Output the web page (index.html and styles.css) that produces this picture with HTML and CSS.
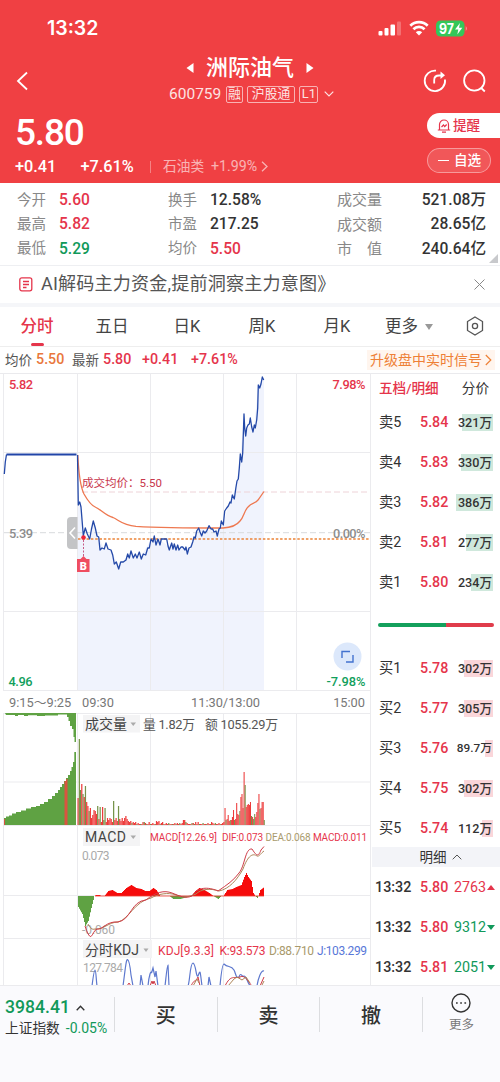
FILE: index.html
```html
<!DOCTYPE html>
<html lang="zh-CN">

<head>
    <meta charset="UTF-8">
    <meta name="viewport" content="width=device-width, initial-scale=1.0">
    <title>洲际油气 600759</title>
    <link rel="stylesheet" href="styles.css">
</head>

<body>
    <header class="header">
        <div class="status-bar">
            <span class="clock">13:32</span>
            <svg class="status-icons" width="92" height="20" viewBox="0 0 92 20">
                <g fill="#fff">
                    <rect x="2.500" y="13" width="4" height="4.500" rx="1" />
                    <rect x="8.500" y="10" width="4" height="7.500" rx="1" />
                    <rect x="14.500" y="6.500" width="4.500" height="11" rx="1" />
                    <rect x="21" y="3.500" width="4" height="14" rx="1" opacity=".25" />
                    <path d="M43 17.500l-3.200-3.300a4.600 4.600 0 0 1 6.400 0z" />
                </g>
                <path d="M34.300 7.700a12.400 12.400 0 0 1 17.400 0M37.400 11.200a8 8 0 0 1 11.200 0" fill="none" stroke="#fff" stroke-width="2.700" />
                <rect x="60" y="2.500" width="28.500" height="16" rx="4.500" fill="#34c759" />
                <path d="M89.800 8q2 2.500 0 5z" fill="#fff" opacity=".5" />
                <text x="63" y="15.500" class="battery" textLength="15" lengthAdjust="spacingAndGlyphs">97</text>
                <path d="M84 5l-5 6.500h3.300l-1 5 5-6.700h-3.300z" fill="#fff" />
            </svg>
        </div>
        <div class="nav">
            <svg class="back" width="14" height="20" viewBox="0 0 14 20"><path d="M11 1.500L2 10l9 8.500" /></svg>
            <div class="title-box">
                <div class="title">
                    <svg width="8" height="10" viewBox="0 0 8 10"><path d="M7.500 0v10L.5 5z" /></svg>
                    <h1>洲际油气</h1>
                    <svg width="8" height="10" viewBox="0 0 8 10"><path d="M.5 0v10l7-5z" /></svg>
                </div>
                <div class="code">
                    <span class="code-num">600759</span>
                    <span class="tag">融</span>
                    <span class="tag tag-hgt">沪股通</span>
                    <span class="tag tag-l1">L1</span>
                    <svg width="10" height="6" viewBox="0 0 10 6"><path d="M.7.7L5 5 9.300.7" /></svg>
                </div>
            </div>
            <div class="nav-icons">
                <svg width="24" height="24" viewBox="0 0 24 24">
                    <path d="M13 1.700A10.200 10.200 0 1 0 22 10.500M11.200 14.500V11q0-4.500 5-4.500h3" />
                    <path d="M17.500 2.500v7.500l4.500-3.700z" class="filled" />
                </svg>
                <svg width="24" height="24" viewBox="0 0 24 24">
                    <circle cx="11.300" cy="11.500" r="10.200" />
                    <path d="M18.200 19l3.600 3.500" />
                </svg>
            </div>
        </div>
        <div class="price-box">
            <div class="price-left">
                <div class="price">5.80</div>
                <div class="change">
                    <b>+0.41</b>
                    <b class="percent">+7.61%</b>
                    <i></i>
                    <span class="industry">石油类</span>
                    <span class="industry-rate">+1.99%</span>
                    <svg width="7" height="11" viewBox="0 0 7 11"><path d="M1 .8l5 4.700-5 4.700" /></svg>
                </div>
            </div>
            <div class="price-right">
                <div class="remind">
                    <svg width="14" height="14" viewBox="0 0 14 14"><path d="M2.500 10.500V5.500a4.500 4.500 0 0 1 9 0v5M.8 11h12.400M5 13.200h4M4.500 8l2-2 1.200 1.500 2-2" /></svg>
                    <span>提醒</span>
                </div>
                <div class="favorite"><i></i><span>自选</span></div>
            </div>
        </div>
    </header>

    <section class="stats">
        <label>今开</label><span class="red">5.60</span><label>换手</label><span>12.58%</span><label class="wide">成交量</label><span class="right">521.08万</span>
        <label>最高</label><span class="red">5.82</span><label>市盈</label><span>217.25</span><label class="wide">成交额</label><span class="right">28.65亿</span>
        <label>最低</label><span class="green">5.29</span><label>均价</label><span class="red">5.50</span><label class="wide">市　值</label><span class="right">240.64亿</span>
        <div class="corner"></div>
    </section>

    <section class="notice">
        <svg width="14" height="15" viewBox="0 0 14 15"><rect x=".8" y=".8" width="12" height="13" rx="2" /><path d="M4 4.500h6M4 7.500h6M4 10.500h3.500" /></svg>
        <p>AI解码主力资金,提前洞察主力意图》</p>
        <svg class="close" width="11" height="11" viewBox="0 0 11 11"><path d="M.5.5l10 10M10.500.5l-10 10" /></svg>
    </section>

    <nav class="tabs">
        <span class="active">分时</span>
        <span>五日</span>
        <span>日K</span>
        <span>周K</span>
        <span>月K</span>
        <span class="more">更多<i></i></span>
        <svg width="18" height="20" viewBox="0 0 18 20"><path d="M9 1l7.500 4.500v9L9 19l-7.500-4.500v-9z" /><circle cx="9" cy="10" r="2.600" /></svg>
    </nav>

    <section class="summary">
        <span>均价</span><b class="orange">5.50</b><span>最新</span><b>5.80</b><b>+0.41</b><b>+7.61%</b>
        <div class="upgrade">升级盘中实时信号<svg width="7" height="12" viewBox="0 0 7 12"><path d="M.8 1l5 5-5 5" /></svg></div>
    </section>

    <main class="main">
        <div class="charts">
            <!-- price -->
            <svg class="chart" width="371" height="318" viewBox="0 373 371 318">
                <path class="area" d="M77.500 455L78.300 505 81 507 83.300 535 89.700 539 93.300 521 98.700 537 104 549 111 550 118.700 566 127 556 141 556 151 540 161 541 169 546 180 548 189 548 198.700 529 211 530 217 532 223.300 525 228 506 236 487 240 458 244 420 246 430 251 425 254 428 258.300 385 264 378V691H77.500z" />
                <path class="grid" d="M3.500 373V691M77.500 373V691M150.500 373V691M223.500 373V691M296.500 373V691M370.500 373V691M3 452.500H371M3 611.500H371M3 690.500H371" />
                <path class="avg-dash" d="M82 492H370" />
                <path class="mid-dash" d="M4 532.700H370" />
                <path class="cost-dash" d="M78 539H370" />
                <path class="avg-line" d="M77.800 455C78.500 470 80 486 84 494C89 503 92 506 96 507.500C100 509 106 516 113 517.500C119 520 122 525 136 526.300C155 527.500 190 528 223 528C232 527.500 237 525 240 521C244 517 244 511 248 507C252 502 255 504 258 500L264 491.500" />
                <path class="open-line" d="M6.500 454.500H76.500" />
                <path class="price-line" d="M4.300 474L5.300 462 6.500 454.500" />
                <path class="price-line" d="M77.500 455L78.300 505 79.700 502 81 507 83.300 535.500 85.300 528 87.300 534 89.700 539 91.500 529 93.300 521 95.300 528 97 536 98.700 537 100 550 102 548 104.300 549 106 543 108 549 111 550 112.700 555 114.300 564 116.300 562 118.700 569 120.700 562 123.300 562 126 560 127.700 554 129.300 558 131 551 133.300 558 135.300 554 137 558 139.300 552 141.300 559 143.300 554 145.700 555 147.700 548 149.300 548 151 539 153 542 154.300 536 156 545 158 539 160 545 161.300 539 166.700 539 168 546 169.300 550 171.700 543 173 549 174.300 544 176 550 177.700 545 179 550 181 547 182.700 547 185 550 186 547 187.300 554 189 548 191 547 192.700 542 194 537 195.300 538 196.700 531 198.700 528 200 532 201.700 536 203.300 531 205 533 206.700 531 209 525.700 211 529 212.700 529 214 532 216 531 217.300 536 219 529 220.300 528 221.300 521 223.300 525 224.700 511 226.700 508 228.300 506 230 502 231 503 232.300 495 234.300 499 236 487 237 481 238.300 479 239.300 468 240.300 454 241.700 462 242.700 453 244 414 244.700 428 245.700 436 246.700 428 248 425 249.300 424 250.300 418 251.700 427 253 432 254.300 425 255.300 428 256.700 420 257.700 408 258.300 385 259.700 388 261 384 262.300 377 263.700 380" />
                <path class="handle" d="M77.500 517H71q-4 0-4 4v24q0 4 4 4h6.500z" />
                <path class="handle-arrow" d="M75 527.500l-5 5.500 5 5.500" />
                <path class="buy-link" d="M83.500 540V559" />
                <circle cx="83.500" cy="537.500" r="2.300" fill="#ee2438" />
                <path d="M83.500 556l3 3h3v13h-12.500v-13h3.500z" fill="#ef4d60" />
                <text x="83.400" y="569.500" class="buy">B</text>
                <text x="9" y="389" class="num red" textLength="24">5.82</text>
                <text x="9" y="537.500" class="num gray" textLength="24">5.39</text>
                <text x="8.500" y="686" class="num green" textLength="24">4.96</text>
                <text x="332.500" y="388.500" class="num red" textLength="33">7.98%</text>
                <text x="333" y="537.500" class="num gray" textLength="32.500">0.00%</text>
                <text x="326.500" y="686" class="num green" textLength="39">-7.98%</text>
                <text x="82" y="487" class="cost" textLength="80">成交均价：5.50</text>
                <circle cx="347.500" cy="656.500" r="14" fill="#dce8fb" />
                <path d="M342 658V651.500H350M353 655V662H346" fill="none" stroke="#4272cf" stroke-width="1.400" />
            </svg>
            <div class="time-axis">
                <span>9:15～9:25</span>
                <span>09:30</span>
                <span>11:30/13:00</span>
                <span>15:00</span>
            </div>
            <!-- volume -->
            <svg class="chart" width="371" height="112" viewBox="0 713 371 112">
                <path class="grid" d="M3.500 713V825M77.500 713V825M150.500 713V825M223.500 713V825M296.500 713V825M370.500 713V825M3 713.500H371M3 782H371" />
                <path fill="#5fa243" d="M5 713H76V742H74.500V737H73.500V729H72V726H70V721H68.500V717H67V714.500H58V715.500H45V716H37V715.200H28V716H24V715H18V716H15V715H6z" />
                <path fill="#5fa243" d="M4 825V818H6V816.500H9V815.500H12V813.500H16V812H21V810.500H26V808.500H31V807H36V806H40V804H44V802H48V799H52V796H55V793H58V790H60V787H62V784H64V781H66V778H68V775H70V771H71.500V767H73V762H74.300V752H76V825z" />
                <path fill="#d85540" d="M64.500 825V781H66V779H67.500V825zM4 825v-6h1v6z" />
                <g id="volumeBars"></g>
                <rect x="83" y="715" width="57" height="17.500" fill="#f4f4f5" />
                <text x="85" y="729" class="name" textLength="42">成交量</text>
                <path d="M130.500 722.500h5.500l-2.750 3.500z" fill="#aaa" />
                <text x="143" y="729" class="vol-text" textLength="52">量 1.82万</text>
                <text x="205" y="729" class="vol-text" textLength="73">额 1055.29万</text>
            </svg>
            <!-- macd -->
            <svg class="chart" width="371" height="113" viewBox="0 825 371 113">
                <path class="grid" d="M3.500 825V938M77.500 825V938M150.500 825V938M223.500 825V938M296.500 825V938M370.500 825V938M3 825.500H371M3 895.500H371" />
                <text x="82" y="859.500" class="scale" textLength="27.500">0.073</text>
                <text x="82" y="934" class="scale" textLength="33">-0.060</text>
                <g id="macdBars"></g>
                <path class="dea" d="M88 924C90 928 92 930 95 929C103 930 109 922 118 922C128 920 135 901 151 898C158 894 168 892 176 895S188 897 196 894C201 889 210 888 219 891C229 889 237 880 243 869C248 855 253 853 257 856C259 857 261 853 264 851" />
                <path class="dif" d="M85 926C87 932 89 937 91 936.500C93 935 94 930 97 929C103 930 106 921 118 922C131 920 131 901 146 900C156 892 164 890 172 893S185 899 192 896C199 885 211 888 218 891C227 885 234 880 239 873C245 866 245 848 252 849C256 855 258 858 261 850L264 846.500" />
                <rect x="83" y="828" width="57" height="18" fill="#f4f4f5" />
                <text x="85" y="841.500" class="name" textLength="41">MACD</text>
                <path d="M130.500 835.500h5.500l-2.750 3.500z" fill="#aaa" />
                <text x="150" y="841" class="macd-text red" textLength="67">MACD[12.26.9]</text>
                <text x="222" y="841" class="macd-text red" textLength="41">DIF:0.073</text>
                <text x="265.500" y="841" class="macd-text tan" textLength="45">DEA:0.068</text>
                <text x="313" y="841" class="macd-text red" textLength="54">MACD:0.011</text>
            </svg>
            <!-- kdj -->
            <svg class="chart" width="371" height="47" viewBox="0 938 371 47">
                <path class="grid" d="M3.500 938V985M77.500 938V985M150.500 938V985M223.500 938V985M296.500 938V985M370.500 938V985M3 938.500H371" />
                <text x="83" y="972" class="scale" textLength="40">127.784</text>
                <path class="kdj-j" d="M92 986C93 978 94 970 95 970S96 978 97 986M123 986C125 972 126 959 127.500 959.500C129 960 130 965 131 975L133 986M140 986L141 975 143 986M148 986C149 975 151 970 151.500 973L153 968 155 977 156 971 158 986M165 986C166 978 167 965 168 965L169 986M188 986C190 981 190 963 193 963C196 964 196 978 198 976C200 971 200 970 201 978L202 986M208 986L209 977 211 986M220 986C221 975 222 964 224 964C228 968 231 965 234 970C236 974 236 979 239 977C241 971 242 978 244 976C247 976 248 986 251 986M257 986C258 979 261 970 264 971" />
                <path class="kdj-k" d="M127 986L129 983 131 986M150 986L152 981 153 984 154 981 156 986M191 986C195 978 195 983 198 977L200 986M225 986C231 974 234 979 240 977C245 974 249 983 252 986M260 986L264 977" />
                <path class="kdj-d" d="M193 986L197 979 199 983M228 986L234 979 237 977 242 980 246 977 250 983M262 985L264 981" />
                <rect x="83" y="940" width="69" height="18" fill="#f4f4f5" />
                <text x="85" y="954.500" class="name" textLength="54">分时KDJ</text>
                <path d="M143.500 948.500h5l-2.500 3.500z" fill="#aaa" />
                <text x="158" y="954.500" class="kdj-text red" textLength="56">KDJ[9.3.3]</text>
                <text x="219.500" y="954.500" class="kdj-text red" textLength="46">K:93.573</text>
                <text x="269" y="954.500" class="kdj-text tan" textLength="45">D:88.710</text>
                <text x="317" y="954.500" class="kdj-text blue" textLength="50">J:103.299</text>
            </svg>
        </div>

        <aside class="book">
            <div class="book-tabs"><b>五档/明细</b><span>分价</span></div>
            <div class="level sell"><span>卖5</span><b>5.84</b><em><i style="width:31px"></i>321万</em></div>
            <div class="level sell"><span>卖4</span><b>5.83</b><em><i style="width:32px"></i>330万</em></div>
            <div class="level sell"><span>卖3</span><b>5.82</b><em><i style="width:37px"></i>386万</em></div>
            <div class="level sell"><span>卖2</span><b>5.81</b><em><i style="width:27px"></i>277万</em></div>
            <div class="level sell"><span>卖1</span><b>5.80</b><em><i style="width:22px"></i>234万</em></div>
            <div class="ratio"></div>
            <div class="level buy-side"><span>买1</span><b>5.78</b><em><i style="width:29px"></i>302万</em></div>
            <div class="level buy-side"><span>买2</span><b>5.77</b><em><i style="width:29px"></i>305万</em></div>
            <div class="level buy-side"><span>买3</span><b>5.76</b><em class="small"><i style="width:8px"></i>89.7万</em></div>
            <div class="level buy-side"><span>买4</span><b>5.75</b><em><i style="width:29px"></i>302万</em></div>
            <div class="level buy-side"><span>买5</span><b>5.74</b><em><i style="width:11px"></i>112万</em></div>
            <div class="detail-head">明细<svg width="10" height="6" viewBox="0 0 10 6"><path d="M.7 5.300L5 1l4.300 4.300" /></svg></div>
            <div class="deal"><span>13:32</span><b>5.80</b><em class="up">2763<i></i></em></div>
            <div class="deal"><span>13:32</span><b>5.80</b><em class="down">9312<i></i></em></div>
            <div class="deal"><span>13:32</span><b>5.81</b><em class="down">2051<i></i></em></div>
        </aside>
    </main>

    <footer class="footer">
        <div class="index">
            <div class="index-value">3984.41<svg width="9" height="6" viewBox="0 0 9 6"><path d="M.7 5.300L4.500 1.200l3.800 4.100" /></svg></div>
            <div class="index-name">上证指数<span>-0.05%</span></div>
        </div>
        <button>买</button>
        <button>卖</button>
        <button>撤</button>
        <div class="footer-more">
            <svg width="20" height="20" viewBox="0 0 20 20">
                <circle cx="10" cy="10" r="9" />
                <path d="M5 10h1.700M9.200 10h1.700M13.400 10h1.700" />
            </svg>
            <span>更多</span>
        </div>
    </footer>

    <script src="script.js"></script>
</body>

</html>
```
FILE: styles.css
```css
* {
    margin: 0;
    padding: 0;
    box-sizing: border-box;
}

body {
    width: 500px;
    height: 1082px;
    overflow: hidden;
    font-family: Roboto, "Noto Sans CJK SC", sans-serif;
    line-height: 1.2;
    background-color: #fff;
    color: #333;
}

svg {
    display: block;
    flex: none;
    fill: none;
}

i, em {
    font-style: normal;
}

b {
    font-weight: 500;
}

.red {
    color: #e5354b;
    fill: #e5354b;
}

.green {
    color: #11995a;
    fill: #11a05c;
}

.tan {
    fill: #a99a6c;
}

.blue {
    fill: #5877d8;
}

/* header */
.header {
    height: 183px;
    background-color: #f04043;
    color: #fff;
}

.status-bar {
    height: 56px;
    padding: 2px 32px 0 47px;
    display: flex;
    align-items: center;
    justify-content: space-between;
}

.clock {
    font-family: Inter, sans-serif;
    font-size: 19.5px;
    font-weight: 600;
    letter-spacing: 0;
}

.status-icons {
    margin-top: -2px;
}

.battery {
    font: 700 14px Inter, sans-serif;
    fill: #fff;
}

.nav {
    height: 54px;
    display: grid;
    grid-template-columns: 120px 1fr 120px;
}

.back {
    margin: 15px 0 0 16px;
    stroke: #fff;
    stroke-width: 1.8;
}

.title {
    display: flex;
    align-items: center;
    justify-content: center;
    gap: 12px;
    height: 23px;
}

.title svg {
    fill: #fff;
}

.title h1 {
    font-size: 22px;
    font-weight: 500;
    line-height: 21px;
}

.code {
    display: flex;
    align-items: center;
    gap: 4.5px;
    height: 30px;
    padding-left: 49px;
    opacity: 0.85;
}

.code-num {
    font-size: 15.5px;
}

.tag {
    width: 17px;
    height: 17px;
    border: 1px solid rgba(255, 255, 255, 0.7);
    border-radius: 2px;
    font-size: 12.8px;
    line-height: 14px;
    text-align: center;
}

.tag-hgt {
    width: 47.5px;
}

.tag-l1 {
    width: 19px;
}

.code svg {
    margin-left: 1px;
    stroke: #fff;
    stroke-width: 1.2;
}

.nav-icons {
    display: flex;
    gap: 16px;
    padding: 13px 0 0 43px;
    stroke: #fff;
    stroke-width: 1.8;
}

.nav-icons .filled {
    fill: #fff;
    stroke: none;
}

.price-box {
    display: flex;
    justify-content: space-between;
}

.price-left {
    padding-left: 15px;
}

.price {
    font-size: 37px;
    font-weight: 500;
    line-height: 46px;
    letter-spacing: -1.2px;
}

.change {
    display: flex;
    align-items: center;
    height: 21px;
    font-size: 16.3px;
}

.change b {
    width: 65.5px;
}

.change .percent {
    width: 69.5px;
}

.change i {
    width: 1px;
    height: 12px;
    margin-right: 12px;
    background-color: rgba(255, 255, 255, 0.35);
}

.industry {
    width: 48px;
    font-size: 13.7px;
    opacity: 0.6;
}

.industry-rate {
    font-size: 14.2px;
    opacity: 0.6;
}

.change svg {
    margin-left: 4px;
    stroke: rgba(255, 255, 255, 0.6);
    stroke-width: 1.3;
}

.price-right {
    width: 73px;
    padding-top: 3px;
}

.remind, .favorite {
    display: flex;
    align-items: center;
    height: 25px;
    font-size: 13.6px;
    font-weight: 500;
}

.remind {
    padding-left: 10px;
    gap: 2px;
    border-radius: 13px 0 0 13px;
    background-color: #fff;
    color: #e5354b;
}

.remind svg {
    stroke: #e5354b;
    stroke-width: 1.2;
}

.favorite {
    width: 64px;
    margin-top: 10px;
    padding-left: 10px;
    gap: 5px;
    border: 1px solid rgba(255, 255, 255, 0.4);
    border-radius: 13px;
    background-color: rgba(255, 255, 255, 0.12);
}

.favorite i {
    width: 11px;
    height: 1.5px;
    background-color: #fff;
}

/* stats */
.stats {
    position: relative;
    display: grid;
    grid-template-columns: 42px 109px 42px 127px 48px 101px;
    grid-template-rows: repeat(3, 24.4px);
    align-items: center;
    height: 83px;
    padding: 5px 14px 0 17px;
    border-bottom: 1px solid #eeeff2;
    font-size: 15.6px;
    font-weight: 500;
    white-space: nowrap;
}

.stats label {
    font-size: 14.5px;
    font-weight: 400;
    color: #888;
}

.stats .wide {
    font-size: 15px;
}

.right {
    text-align: right;
}

.corner {
    position: absolute;
    right: 2px;
    bottom: 2px;
    border-left: 9px solid transparent;
    border-bottom: 9px solid #c8c9cc;
}

/* notice */
.notice {
    display: flex;
    align-items: center;
    height: 41px;
    padding: 0 15px 1px 19px;
    border-bottom: 4px solid #f5f6f9;
    stroke: #e5354b;
    stroke-width: 1.3;
}

.notice p {
    flex: 1;
    margin-left: 8px;
    font-size: 18.1px;
    color: #555;
    letter-spacing: 0.15px;
    white-space: nowrap;
    stroke: none;
}

.notice .close {
    stroke: #888;
    stroke-width: 1;
}

/* tabs */
.tabs {
    display: flex;
    height: 40px;
    border-bottom: 1px solid #eee;
    font-size: 16.5px;
    line-height: 39px;
    color: #444;
}

.tabs span {
    position: relative;
    width: 75px;
    padding-right: 1px;
    text-align: center;
}

.tabs .active {
    color: #e5354b;
    font-weight: 500;
}

.tabs .active::after {
    content: "";
    position: absolute;
    left: 31px;
    bottom: 0;
    width: 13px;
    height: 3px;
    border-radius: 2px;
    background-color: #e5354b;
}

.tabs .more {
    display: flex;
    align-items: center;
    gap: 7px;
    width: 91px;
    padding-left: 10px;
}

.more i {
    border: 4.5px solid transparent;
    border-top: 6px solid #999;
    border-bottom: 0;
}

.tabs svg {
    margin-top: 9px;
    stroke: #555;
    stroke-width: 1.3;
}

/* summary */
.summary {
    display: grid;
    grid-template-columns: 31px 36px 31px 39px 49px 50px 1fr;
    align-items: center;
    height: 26px;
    padding: 0 5px;
    font-size: 13.5px;
    color: #555;
    white-space: nowrap;
}

.summary b {
    font-size: 14.3px;
    color: #e5354b;
}

.summary .orange {
    color: #e9773b;
}

.upgrade {
    display: flex;
    align-items: center;
    justify-self: end;
    gap: 3px;
    height: 20px;
    padding: 0 3px;
    background-color: #fff5ee;
    font-size: 14px;
    color: #ee8036;
}

.upgrade svg {
    stroke: #ee8036;
    stroke-width: 1.2;
}

/* charts */
.main {
    display: flex;
    height: 612px;
    border-top: 1px solid #eaeaed;
}

.charts {
    width: 371px;
    margin-top: -1px;
}

.grid {
    stroke: #ebebee;
}

.area {
    fill: #f0f3fd;
}

.price-line {
    stroke: #2449a8;
    stroke-width: 1.3;
    stroke-linejoin: round;
}

.open-line {
    stroke: #2145a8;
    stroke-width: 2;
}

.avg-line {
    stroke: #ee7850;
    stroke-width: 1.3;
}

.avg-dash {
    stroke: #eed3d8;
    stroke-dasharray: 6 3;
}

.mid-dash {
    stroke: #d8dadd;
    stroke-dasharray: 6 3;
}

.cost-dash {
    stroke: #ec8438;
    stroke-width: 1.3;
    stroke-dasharray: 2.5 1.8;
}

.handle {
    fill: #c3c4c6;
}

.handle-arrow {
    stroke: #fff;
    stroke-width: 1.6;
}

.buy-link {
    stroke: #c65b86;
    stroke-dasharray: 2 1.5;
}

.buy {
    font-size: 11px;
    font-weight: 900;
    fill: #fff;
    text-anchor: middle;
}

.num {
    font-size: 12.8px;
    font-weight: 500;
}

.gray {
    fill: #8c8c8c;
}

.cost {
    font-size: 11.5px;
    fill: #c8364b;
}

.time-axis {
    display: grid;
    grid-template-columns: 73px 109px 1fr auto;
    align-items: center;
    height: 22px;
    padding: 1px 5px 0 9px;
    border-right: 1px solid #ebebee;
    font-size: 12.8px;
    color: #777;
    white-space: nowrap;
}

.name {
    font-size: 14px;
    fill: #444;
}

.vol-text {
    font-size: 12.8px;
    fill: #555;
}

.scale {
    font-size: 12px;
    fill: #aaa;
}

.macd-text {
    font-size: 10px;
}

.kdj-text {
    font-size: 12px;
}

.dif {
    stroke: #cf3b47;
}

.dea {
    stroke: #ad8558;
}

.kdj-j {
    stroke: #5d78ce;
    stroke-width: 1.2;
}

.kdj-k {
    stroke: #cf3b47;
}

.kdj-d {
    stroke: #ad8558;
}

/* order book */
.book {
    width: 129px;
    font-size: 14.3px;
}

.book b {
    color: #e5354b;
}

.book-tabs {
    display: flex;
    justify-content: space-between;
    height: 28px;
    padding: 0 11px 0 8px;
    font-size: 13.6px;
    line-height: 28px;
}

.level {
    display: grid;
    grid-template-columns: 41px 1fr auto;
    align-items: center;
    height: 40px;
    padding: 1px 8px 0 8px;
}

.level em {
    position: relative;
    z-index: 0;
    height: 17px;
    font-size: 12.6px;
    font-weight: 500;
    line-height: 17px;
}

.level .small {
    font-size: 11.8px;
}

.level i {
    position: absolute;
    z-index: -1;
    top: 0;
    right: -1px;
    height: 17px;
}

.sell i {
    background-color: #cfe8dc;
}

.buy-side i {
    background-color: #fad6da;
}

.ratio {
    height: 4px;
    margin: 21px 6px 21px 7px;
    border-radius: 2px;
    background: linear-gradient(to right, #14a05c 59%, #e03c4b 59%);
}

.detail-head {
    display: flex;
    align-items: center;
    justify-content: center;
    gap: 5px;
    height: 20px;
    margin: -1px 0 0 1px;
    padding-left: 9px;
    background-color: #f3f4f8;
    font-size: 13.5px;
}

.detail-head svg {
    stroke: #555;
}

.deal {
    display: grid;
    grid-template-columns: 45px 34px 1fr;
    align-items: center;
    height: 40px;
    padding: 1px 0 0 4px;
}

.deal span {
    font-weight: 500;
}

.deal em {
    display: flex;
    align-items: center;
    gap: 1px;
}

.deal i {
    border: 4px solid transparent;
}

.up {
    color: #e5354b;
}

.up i {
    border-top: 0;
    border-bottom: 5px solid #e5354b;
}

.down {
    color: #11995a;
}

.down i {
    border-bottom: 0;
    border-top: 5px solid #11995a;
}

/* footer */
.footer {
    display: flex;
    height: 97px;
    padding-top: 11px;
    border-top: 1px solid #ebebee;
    background-color: #fafafd;
}

.index {
    width: 114px;
    height: 35px;
    padding-left: 5px;
    color: #11995a;
    white-space: nowrap;
}

.index-value {
    display: flex;
    align-items: center;
    gap: 6px;
    font-size: 17.6px;
    font-weight: 500;
    line-height: 21px;
}

.index-value svg {
    stroke: #333;
    stroke-width: 1.3;
}

.index-name {
    font-size: 13.7px;
    line-height: 21px;
    color: #333;
}

.index-name span {
    margin-left: 6px;
    font-size: 14px;
    color: #11995a;
}

.footer button {
    width: 102.6px;
    height: 35px;
    border: 0;
    border-left: 1px solid #dcdde0;
    background: none;
    font-family: "Noto Sans CJK SC", sans-serif;
    font-size: 20px;
    font-weight: 500;
    line-height: 33px;
    color: #333;
}

.footer-more {
    display: flex;
    flex: 1;
    flex-direction: column;
    align-items: center;
    height: 35px;
    border-left: 1px solid #dcdde0;
    font-size: 12.5px;
    line-height: 24px;
    color: #777;
}

.footer-more svg {
    margin-top: -4px;
    stroke: #333;
    stroke-width: 1.4;
}
```
FILE: script.js
```js
const SVG_NS = 'http://www.w3.org/2000/svg';

function addBar(group, x, y, width, height, color) {
    const rect = document.createElementNS(SVG_NS, 'rect');
    rect.setAttribute('x', x);
    rect.setAttribute('y', y);
    rect.setAttribute('width', width);
    rect.setAttribute('height', height);
    rect.setAttribute('fill', color);
    group.appendChild(rect);
}

// one value per minute from 09:30, negative = falling minute
const volumes = [
    27, -86, -35, 41, -31, 28, -39, 23, 19, -14, 17, 7, 10, 15, 14, 11,
    -19, 6, -18, 3, 18, -5, -17, 3, 7, 5, 7, 6, 3, -24, 5, 7,
    4, -19, 6, 4, 7, 4, 7, 9, 6, 4, 3, 4, -2, 3, 2, 3,
    -1, 2, 1, -1, 1, 3, -3, 2, -1, 1, 3, -1, 1, 2, 1, -1,
    4, 3, 4, -1, 2, 3, -1, 1, 2, 1, -2, 1, 1, -1, 1, 2,
    -1, 2, 1, -2, 1, 2, 5, 5, -3, 2, 1, 1, 1, -2, 2, -1,
    3, 1, 3, -1, 1, 1, -2, 1, 1, -1, 2, 1, -1, 3, 2, 1,
    -2, 1, 1, 2, -1, 1, 2, 3, 17, -5, 6, 10, 4, -5, 5, 8,
    15, -5, 6, 22, 11, 10, -14, 28, 31, 17, 53, -40, 18, 20, 21, 20,
    23, -9, 8, -6, -11, 8, 13, 22, 31, -16, 17, 23, 23, -5
];

const volumeBars = document.getElementById('volumeBars');
volumes.forEach((v, i) => {
    const h = Math.abs(v);
    const x = i < 120 ? 77.5 + i * 1.225 : 224.5 + (i - 120) * 1.06;
    const width = i < 120 ? 1.225 : 1.06;
    addBar(volumeBars, x, 825 - h, width, h, v > 0 ? '#ed3b3b' : '#759248');
});

// [x, height] key points of the histogram, linear between them
const macd = [
    [78, -11], [82, -18], [85, -30], [88, -25], [91, -12], [94, 0], [96, 1], [99, 1], [101, 0],
    [104, 0], [108, 5], [112, 6], [117, 3], [121, 3], [126, 8], [131, 11], [136, 8], [141, 7],
    [145, 5], [149, 5], [153, 8], [156, 6], [160, 0], [169, 0], [173, -3], [180, -3], [187, -1],
    [192, 1], [195, 5], [199, 8], [204, 6], [209, 3], [213, 0], [218, -3], [221, 0], [223, 0],
    [227, 6], [232, 7], [236, 9], [241, 11], [244, 19], [246, 23], [248, 19], [251, 15], [253, 3],
    [255, 0], [257, -2], [258, 0], [260, 6], [264, 9]
];

const macdBars = document.getElementById('macdBars');
for (let i = 0; i < macd.length - 1; i++) {
    const [x1, h1] = macd[i];
    const [x2, h2] = macd[i + 1];
    for (let x = x1; x < x2; x++) {
        const h = h1 + (h2 - h1) * (x - x1) / (x2 - x1);
        addBar(macdBars, x, h > 0 ? 896 - h : 896, 1, Math.abs(h), h > 0 ? '#f60b0b' : '#5fa243');
    }
}
addBar(macdBars, 95, 895.6, 169, 0.8, '#ee3b2f');
```
